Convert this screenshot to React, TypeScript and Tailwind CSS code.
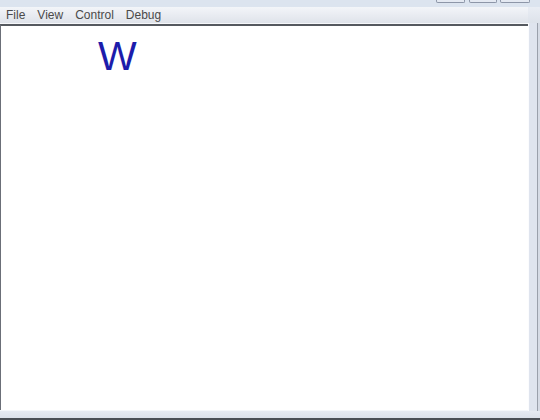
export default function App() {
  const menus = ["File", "View", "Control", "Debug"];

  return (
    <div className="flex h-[420px] w-[540px] flex-col overflow-hidden bg-[#dfe5ef] font-['Liberation_Sans',Arial,sans-serif]">
      {/* title bar remnant with caption buttons */}
      <div className="flex h-[7px] justify-end bg-[#dce4ef] pr-[10px]">
        <div className="h-[3px] w-[29px] rounded-b-[2px] border-x border-b border-[#8d96a8] bg-[#e4e9f2]" />
        <div className="ml-[4px] h-[3px] w-[28px] rounded-b-[2px] border-x border-b border-[#8d96a8] bg-[#e4e9f2]" />
        <div className="ml-[3px] h-[3px] w-[30px] rounded-b-[2px] border-x border-b border-[#8d96a8] bg-[#e4e9f2]" />
      </div>

      <div className="flex flex-1">
        <div className="flex flex-1 flex-col">
          {/* menu bar */}
          <div className="flex h-[16px] items-center gap-[12px] bg-gradient-to-b from-[#f3f5f9] to-[#dfe3ea] pl-[6px] text-[12px] leading-none text-[#4a4a4a]">
            {menus.map((m) => (
              <span key={m}>{m}</span>
            ))}
          </div>
          <div className="h-[1px] bg-[#f6f7fa]" />

          {/* client area */}
          <div className="flex flex-1 flex-col border-l border-t-2 border-l-[#6b6f78] border-t-[#55595f] bg-white">
            <div className="pl-[97px] pt-[10px] font-['Liberation_Sans',Arial,sans-serif] text-[41px] leading-none text-[#1c1cab]">
              W
            </div>
          </div>
          <div className="h-[1px] bg-[#f4f6fa]" />
        </div>

        {/* right frame */}
        <div className="flex w-[12px] flex-col">
          <div className="h-[16px] bg-gradient-to-b from-[#e9edf4] to-[#dde2ea]" />
          <div className="flex flex-1">
            <div className="w-[1px] bg-[#fbfcfe]" />
            <div className="w-[8px] bg-[#dfe4ee]" />
            <div className="w-[1px] bg-[#9aa0ab]" />
            <div className="w-[2px] bg-[#d6dbe5]" />
          </div>
        </div>
      </div>

      {/* bottom frame */}
      <div className="h-[7px] bg-gradient-to-b from-[#e6eaf2] to-[#dbe0ea]" />
      <div className="h-[2px] bg-[#4a4e55]" />
    </div>
  );
}
